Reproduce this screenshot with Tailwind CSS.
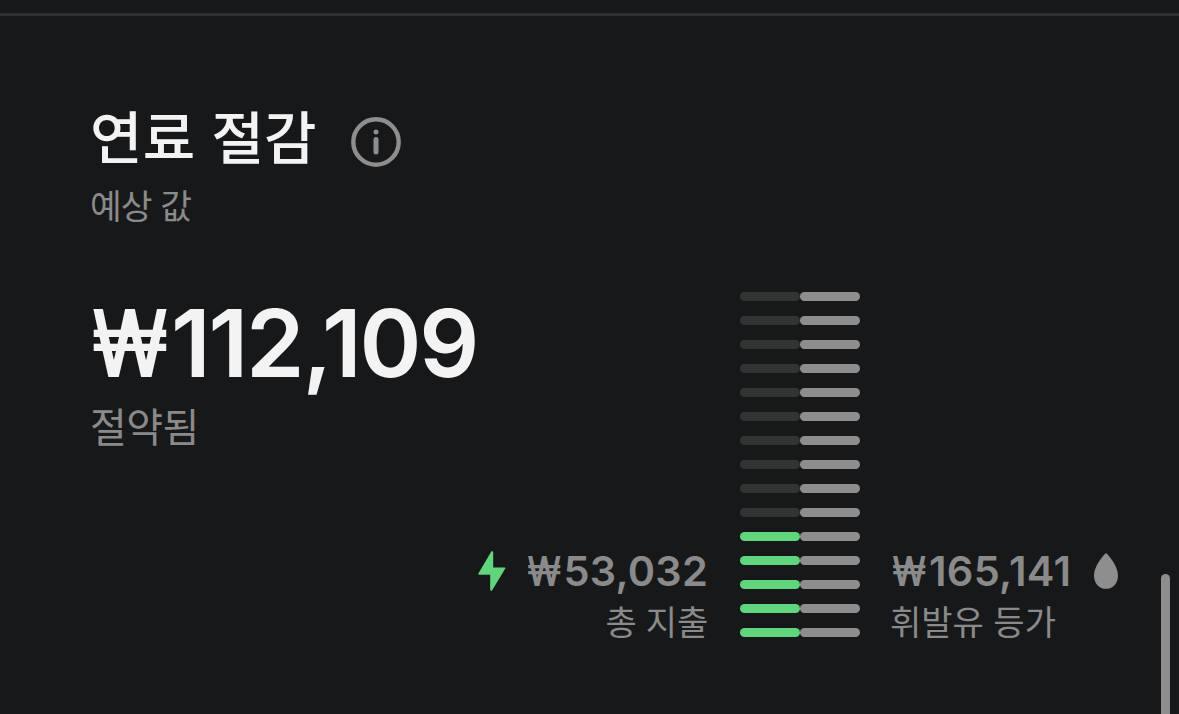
<!DOCTYPE html>
<html lang="ko">
  <head>
    <meta charset="UTF-8" />
    <title>연료 절감</title>
    <script src="https://cdn.jsdelivr.net/npm/@tailwindcss/browser@4"></script>
  </head>
  <body
    class="relative h-[714px] overflow-hidden bg-[#17181a] font-['Inter','Noto_Sans_CJK_KR',sans-serif] whitespace-nowrap text-[#8a8a8a]"
  >
    <div class="mt-[13px] h-[3px] bg-[#2f3032]"></div>

    <main class="pl-[90px]">
      <header class="pt-[86px]">
        <div class="flex h-16 items-center">
          <h1
            class="w-[261px] font-['Noto_Sans_CJK_KR',sans-serif] text-[57px] leading-16 font-medium tracking-[0.2px] text-[#f3f3f4]"
          >
            연료 절감
          </h1>
          <svg class="mt-4 size-[50px]" viewBox="0 0 50 50" fill="none">
            <circle cx="25" cy="25" r="22.7" stroke="#8e8e8e" stroke-width="4.4" />
            <circle cx="25" cy="15" r="2.5" fill="#8e8e8e" />
            <path d="M25 22.5v12.5" stroke="#8e8e8e" stroke-width="5" stroke-linecap="round" />
          </svg>
        </div>
        <p
          class="mt-[18px] h-10 font-['Noto_Sans_CJK_KR',sans-serif] text-[34.5px] leading-10 tracking-[-1px]"
        >
          예상 값
        </p>
      </header>

      <div class="flex pt-[68px]">
        <section class="w-[388px]">
          <p class="mt-[3px] flex h-24 text-[94px] leading-24 font-semibold text-[#f3f3f4]">
            <span class="ml-px w-[80px] origin-left scale-x-[0.82]">₩</span>
            <span class="tracking-[-2.2px]">112,109</span>
          </p>
          <p
            class="mt-[10px] h-12 font-['Noto_Sans_CJK_KR',sans-serif] text-[40px] leading-12 tracking-[-0.5px]"
          >
            절약됨
          </p>
        </section>

        <section class="flex h-[345px] items-end">
          <div class="flex w-[230px] translate-y-1 flex-col items-end">
            <div class="flex h-12 w-full items-center">
              <svg class="h-10 w-7" viewBox="0 0 28 40">
                <path
                  d="M13.3.6.4 22.6c-.3.5 0 1.1.6 1.1h11.2v15.4c0 .9 1.5 1 2 .2L27.3 17.5c.3-.5 0-1.1-.6-1.1H15.2V1c0-.9-1.4-1.2-1.9-.4Z"
                  fill="#61d47e"
                />
              </svg>
              <p class="ml-auto flex text-[41.5px] font-semibold">
                <span class="w-[36px] origin-left scale-x-[0.82]">₩</span>
                <span class="tracking-[0.2px]">53,032</span>
              </p>
            </div>
            <p
              class="mt-[6px] h-10 font-['Noto_Sans_CJK_KR',sans-serif] text-[34px] leading-10 tracking-[-0.2px]"
            >
              총 지출
            </p>
          </div>

          <div id="bars" class="ml-8 flex w-[120px] flex-col gap-[15px]"></div>

          <div class="ml-[30px] flex w-[230px] translate-y-1 flex-col">
            <div class="flex h-12 items-center">
              <p class="flex w-[204px] text-[41.5px] font-semibold">
                <span class="ml-0.5 w-[37px] origin-left scale-x-[0.82]">₩</span>
                <span class="tracking-[0.3px]">165,141</span>
              </p>
              <svg class="h-9 w-6" viewBox="0 0 24 36">
                <path
                  d="M10.8.9C6.5 5.4 0 14.6 0 22.4 0 30.4 5.2 35.8 12 35.8s12-5.4 12-13.4C24 14.6 17.5 5.4 13.2.9c-.8-.8-1.6-.8-2.4 0Z"
                  fill="#8e8e8e"
                />
              </svg>
            </div>
            <p
              class="mt-[6px] h-10 font-['Noto_Sans_CJK_KR',sans-serif] text-[34px] leading-10"
            >
              휘발유 등가
            </p>
          </div>
        </section>
      </div>
    </main>

    <!-- scrollbar -->
    <div class="absolute top-[574px] right-[9px] h-[140px] w-[9px] rounded-t-full bg-[#8e8e8e]"></div>

    <script>
      const total = 15;
      const spent = 5;
      const bars = document.getElementById("bars");
      for (let i = 0; i < total; i++) {
        const color = i >= total - spent ? "bg-[#61d47e]" : "bg-[#323333]";
        bars.innerHTML += `
          <div class="flex h-[9px]">
            <div class="w-[60px] rounded-full ${color}"></div>
            <div class="w-[60px] rounded-full bg-[#8e8e8e]"></div>
          </div>
        `;
      }
    </script>
  </body>
</html>
